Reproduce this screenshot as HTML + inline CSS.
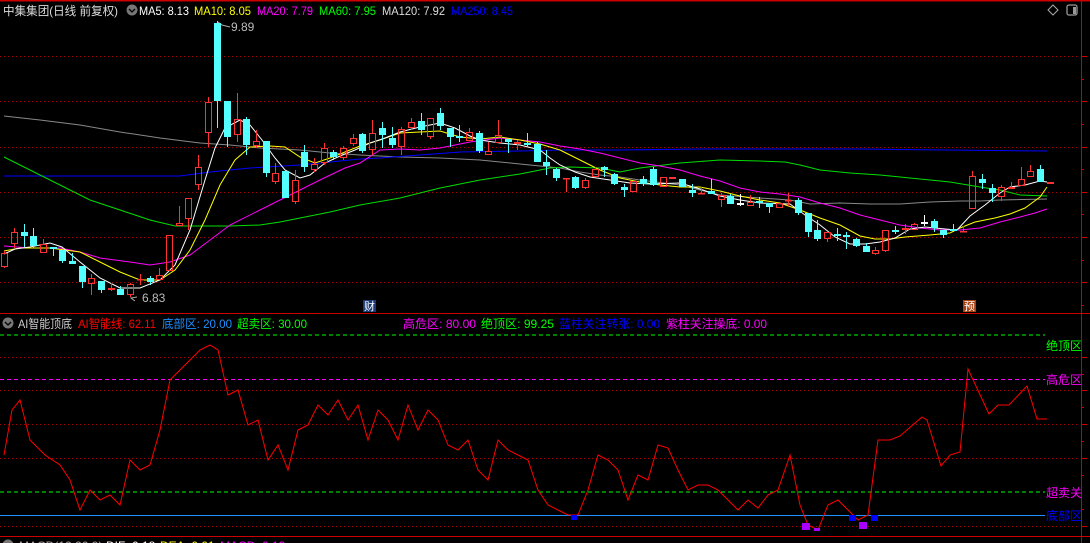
<!DOCTYPE html>
<html><head><meta charset="utf-8">
<style>
html,body{margin:0;padding:0;background:#000;width:1090px;height:543px;overflow:hidden}
svg{display:block}
text{font-family:"Liberation Sans","Noto Sans CJK SC",sans-serif;font-size:12px}
</style></head>
<body>
<svg id="s" width="1090" height="543" viewBox="0 0 1090 543" xmlns="http://www.w3.org/2000/svg">
<rect width="1090" height="543" fill="#000"/>
<line x1="0" y1="0.5" x2="1090" y2="0.5" stroke="#c00" stroke-width="2"/>
<line x1="0" y1="313.5" x2="1090" y2="313.5" stroke="#c00"/>
<line x1="0" y1="536.5" x2="1090" y2="536.5" stroke="#c00"/>
<line x1="1081.5" y1="0" x2="1081.5" y2="543" stroke="#c00"/>
<g id="grid" stroke="#a00" stroke-dasharray="1 3"></g>
<g id="ticks" stroke="#c00"></g>
<!-- header -->
<text x="3" y="15" fill="#ddd" textLength="115" lengthAdjust="spacingAndGlyphs">中集集团(日线 前复权)</text>
<circle cx="132" cy="10" r="5.5" fill="#777"/>
<path d="M129 9 L132 12 L135 9" stroke="#000" stroke-width="1.3" fill="none"/>
<text x="139" y="15" fill="#fff" textLength="50" lengthAdjust="spacingAndGlyphs">MA5: 8.13</text>
<text x="194" y="15" fill="#ff0" textLength="57" lengthAdjust="spacingAndGlyphs">MA10: 8.05</text>
<text x="257" y="15" fill="#f0f" textLength="56" lengthAdjust="spacingAndGlyphs">MA20: 7.79</text>
<text x="319" y="15" fill="#0f0" textLength="57" lengthAdjust="spacingAndGlyphs">MA60: 7.95</text>
<text x="382" y="15" fill="#ddd" textLength="63" lengthAdjust="spacingAndGlyphs">MA120: 7.92</text>
<text x="451" y="15" fill="#00f" textLength="62" lengthAdjust="spacingAndGlyphs">MA250: 8.45</text>
<path d="M1053 5 L1058 10 L1053 15 L1048 10 Z" stroke="#aaa" fill="none"/>
<rect x="1067" y="5" width="10" height="10" rx="2" stroke="#999" fill="none" stroke-width="1.3"/>
<rect x="1073" y="7" width="3" height="7" fill="#999"/>
<!-- price labels -->
<path d="M218 22 L222 25 L230 27" stroke="#aaa" fill="none"/>
<text x="231" y="31" fill="#bbb">9.89</text>
<path d="M137 297 L131 298 L135 301" stroke="#aaa" fill="none"/>
<text x="142" y="302" fill="#bbb">6.83</text>
<g id="mas" fill="none" stroke-width="1"></g>
<g id="candles"></g>
<rect x="363" y="300" width="13" height="12" fill="#1a3a7a"/>
<text x="364" y="310" fill="#fff" style="font-size:11px">财</text>
<rect x="963" y="300" width="13" height="12" fill="#a84010"/>
<text x="964" y="310" fill="#fff" style="font-size:11px">预</text>
<!-- lower header -->
<circle cx="8" cy="323" r="5.5" fill="#777"/>
<path d="M5 322 L8 325 L11 322" stroke="#000" stroke-width="1.3" fill="none"/>
<text x="18" y="328" fill="#ccc" textLength="54" lengthAdjust="spacingAndGlyphs">AI智能顶底</text>
<text x="78" y="328" fill="#f00" textLength="78" lengthAdjust="spacingAndGlyphs">AI智能线: 62.11</text>
<text x="162" y="328" fill="#1e90ff" textLength="70" lengthAdjust="spacingAndGlyphs">底部区: 20.00</text>
<text x="237" y="328" fill="#0f0" textLength="70" lengthAdjust="spacingAndGlyphs">超卖区: 30.00</text>
<text x="403" y="328" fill="#f0f" textLength="73" lengthAdjust="spacingAndGlyphs">高危区: 80.00</text>
<text x="481" y="328" fill="#0f0" textLength="73" lengthAdjust="spacingAndGlyphs">绝顶区: 99.25</text>
<text x="559" y="328" fill="#00f" textLength="101" lengthAdjust="spacingAndGlyphs">蓝柱关注转张: 0.00</text>
<text x="666" y="328" fill="#f0f" textLength="101" lengthAdjust="spacingAndGlyphs">紫柱关注操底: 0.00</text>
<line x1="0" y1="335" x2="1045" y2="335" stroke="#0f0" stroke-dasharray="4 3"/>
<line x1="0" y1="379.5" x2="1045" y2="379.5" stroke="#f0f" stroke-dasharray="4 3"/>
<line x1="0" y1="492" x2="1045" y2="492" stroke="#0f0" stroke-dasharray="4 3"/>
<line x1="0" y1="515.5" x2="1045" y2="515.5" stroke="#1e90ff"/>
<text x="1046" y="350" fill="#0f0">绝顶区</text>
<text x="1046" y="384" fill="#f0f">高危区</text>
<text x="1046" y="497" fill="#f0f">超卖关</text>
<text x="1046" y="520" fill="#00f">底部区</text>
<polyline fill="none" stroke="#f00" points="4,455 12,410 20,400 30,440 45,455 60,465 70,480 80,510 90,490 100,500 110,495 120,505 130,460 140,470 150,465 160,430 170,380 185,365 200,350 210,345 218,350 228,395 238,390 248,425 258,420 268,460 278,445 288,470 298,430 308,425 318,405 328,415 338,400 348,420 358,405 368,440 378,410 388,420 398,440 408,405 418,430 428,410 438,420 448,445 458,450 468,440 478,470 488,480 498,440 508,450 518,455 528,460 538,490 548,505 558,510 568,515 578,515 588,490 598,455 608,460 618,470 628,500 638,475 648,480 658,445 668,448 678,470 688,490 698,485 708,485 718,490 728,500 738,510 748,500 758,508 768,495 778,490 790,455 800,505 808,525 818,530 828,505 838,500 848,510 858,520 868,515 878,440 890,440 900,436 922,417 927,420 941,466 950,455 960,452 968,369 989,414 998,405 1009,405 1027,386 1037,419 1047,419"/>
<rect x="571" y="515" width="6" height="5" fill="#00f"/>
<rect x="802" y="523" width="8" height="7" fill="#a0f"/>
<rect x="814" y="528" width="6" height="3" fill="#a0f"/>
<rect x="849" y="515" width="7" height="6" fill="#00f"/>
<rect x="859" y="522" width="8" height="7" fill="#a0f"/>
<rect x="871" y="515" width="7" height="6" fill="#00f"/>
<!-- MACD header -->
<circle cx="8" cy="545" r="5.5" fill="#777"/>
<text x="19" y="550" fill="#aaa">MACD(12,26,9)</text>
<text x="106" y="550" fill="#fff">DIF: 0.18</text>
<text x="160" y="550" fill="#ff0">DEA: 0.01</text>
<text x="220" y="550" fill="#f0f">MACD: 0.13</text>
</svg>
<script>
var NS="http://www.w3.org/2000/svg";
function el(p,t,a){var e=document.createElementNS(NS,t);for(var k in a)e.setAttribute(k,a[k]);p.appendChild(e);return e;}
var g=document.getElementById("grid"),tk=document.getElementById("ticks");
[56,101,147,192,237,282,357,390,424,458,526].forEach(function(y){el(g,"line",{x1:0,y1:y+.5,x2:1078,y2:y+.5});el(tk,"line",{x1:1081,y1:y+.5,x2:1087,y2:y+.5});});
[79,124,169,214,260,305,374,407,441,475,509].forEach(function(y){el(tk,"line",{x1:1081,y1:y+.5,x2:1084,y2:y+.5});});
var mas=document.getElementById("mas");
var L={
"#888":"4,116 40,120 80,125 120,132 160,138 200,143 230,145 260,148 300,150 330,153 360,155 400,157 440,158 480,160 520,164 560,168 580,172 600,175 620,177 640,180 680,185 700,190 720,195 760,198 790,200 810,204 840,203 870,204 900,204 930,202 960,201 980,201 1000,200 1047,199",
"#00f":"4,176 180,176 210,172 250,168 300,165 360,159 380,158 420,155 460,152 520,151 560,150 620,150 700,149 860,149 946,150 1047,151",
"#0d0":"4,157 30,170 60,185 90,200 120,210 150,220 175,226 200,226 230,226 260,225 280,222 300,218 330,212 360,205 400,198 440,188 480,180 520,174 550,168 570,167 600,168 620,172 640,168 680,163 720,160 760,161 785,162 800,165 820,170 850,173 880,175 910,178 950,182 980,187 1000,190 1020,195 1047,196",
"#f0f":"4,246 30,248 60,248 80,252 100,258 130,262 150,265 170,262 190,255 210,240 230,225 260,210 280,200 300,190 320,180 345,168 360,163 380,150 400,149 420,150 440,148 470,142 500,138 520,140 540,142 560,146 580,149 600,153 620,158 640,163 660,166 680,170 700,176 720,181 740,188 760,192 780,194 800,197 820,203 840,208 860,215 880,220 900,225 920,228 940,230 960,230 980,228 1000,222 1020,217 1035,213 1047,209",
"#ff0":"4,251 20,248 50,248 80,252 100,262 120,272 140,280 160,280 175,270 190,250 205,220 220,185 235,160 250,147 270,146 285,147 300,157 315,163 330,158 345,152 360,146 380,140 400,133 420,132 440,131 460,137 480,139 500,137 520,140 540,144 560,150 580,160 600,170 620,178 640,182 660,185 680,187 700,187 720,191 740,196 760,200 780,203 800,210 820,218 840,225 860,236 875,239 890,239 905,237 930,235 950,233 960,228 975,222 995,218 1010,214 1025,208 1040,197 1047,187",
"#fff":"4,254 15,249 30,247 50,243 62,247 80,262 100,278 120,288 140,288 160,280 175,265 190,230 205,180 215,148 225,128 240,120 250,125 262,140 275,158 285,170 300,178 310,175 325,163 340,156 355,150 370,143 385,138 400,132 420,127 440,123 455,128 470,136 480,140 500,143 520,145 540,150 550,158 560,165 575,172 590,177 610,180 630,183 650,184 680,183 700,189 720,196 740,200 760,203 790,204 805,215 820,225 835,237 850,244 865,244 880,242 895,238 910,229 925,227 945,229 957,230 970,216 985,205 1000,193 1010,187 1025,185 1040,181 1047,182"};
for(var c in L)el(mas,"polyline",{points:L[c],stroke:c});
var D=[[253,267,251,268,"r"],[232,244,228,248,"r"],[232,236,224,247,"c"],[236,246,228,248,"c"],[244,253,239,253,"r"],[247,249,247,256,"c"],[250,261,250,263,"c"],[261,264,253,264,"c"],[266,282,266,288,"c"],[278,284,274,295,"r"],[281,290,281,293,"c"],[288,290,283,291,"r"],[289,295,286,295,"c"],[284,295,283,297,"r"],[279,280,274,285,"r"],[278,282,276,285,"c"],[275,280,268,280,"r"],[235,271,235,271,"r"],[223,226,206,226,"r"],[198,219,198,230,"r"],[167,185,155,190,"r"],[102,133,97,147,"r"],[23,101,21,128,"c"],[101,137,101,147,"c"],[119,135,93,142,"r"],[119,145,117,155,"c"],[141,146,130,148,"r"],[141,173,141,177,"c"],[173,182,163,184,"r"],[171,198,171,198,"c"],[180,202,170,204,"r"],[152,167,145,172,"c"],[164,170,158,172,"r"],[148,163,143,165,"r"],[152,157,150,160,"c"],[148,158,146,160,"r"],[138,144,134,146,"r"],[134,151,133,153,"c"],[133,150,120,155,"r"],[128,135,122,148,"c"],[138,145,127,148,"c"],[129,147,127,155,"r"],[122,128,118,130,"r"],[121,130,113,135,"c"],[118,137,118,139,"r"],[113,126,108,130,"c"],[128,137,128,147,"c"],[136,138,125,142,"c"],[132,141,128,141,"r"],[133,151,131,153,"c"],[151,155,142,155,"r"],[135,143,120,143,"r"],[139,142,139,153,"c"],[142,144,140,150,"r"],[143,145,133,147,"c"],[144,162,142,162,"c"],[162,166,150,175,"c"],[169,178,168,181,"c"],[178,179,178,192,"r"],[177,188,176,189,"c"],[180,188,178,189,"r"],[169,177,167,177,"r"],[167,170,166,177,"c"],[174,184,173,185,"c"],[187,190,184,197,"c"],[181,192,181,192,"r"],[179,184,176,186,"c"],[169,185,167,186,"c"],[177,187,177,187,"r"],[177,179,177,179,"r"],[179,187,179,187,"c"],[190,193,184,197,"c"],[193,194,187,194,"r"],[191,194,179,194,"c"],[195,200,193,207,"r"],[196,204,194,204,"c"],[203,205,194,206,"w"],[202,206,195,206,"r"],[201,203,197,208,"c"],[203,207,203,213,"c"],[203,208,203,208,"r"],[200,201,193,206,"r"],[200,213,198,215,"c"],[213,232,213,237,"c"],[230,239,220,241,"c"],[232,239,232,242,"r"],[234,236,228,241,"c"],[235,237,232,249,"c"],[239,246,238,247,"c"],[246,252,243,252,"c"],[250,254,247,255,"r"],[230,251,230,252,"r"],[230,232,226,234,"c"],[228,230,224,234,"r"],[224,230,223,230,"r"],[222,224,215,226,"w"],[221,228,219,232,"c"],[230,235,230,238,"c"],[229,231,224,232,"c"],[231,232,226,232,"r"],[176,209,171,209,"r"],[179,183,174,189,"c"],[188,193,184,202,"c"],[187,197,185,201,"r"],[187,189,182,189,"r"],[179,186,167,186,"r"],[171,177,165,177,"r"],[169,182,165,182,"c"],[182,184,182,184,"r"]];
var cg=document.getElementById("candles");
D.forEach(function(d,i){
 var x=Math.round(4.3+9.68*i)+.5,t=d[0],b=d[1],h=d[2],l=d[3],k=d[4];
 var col=k=="r"?"#ff3232":(k=="c"?"#54ffff":"#fff");
 if(h<t)el(cg,"line",{x1:x,y1:h,x2:x,y2:t,stroke:col});
 if(l>b)el(cg,"line",{x1:x,y1:b,x2:x,y2:l,stroke:col});
 if(b-t<=2){el(cg,"rect",{x:x-3.5,y:t,width:7,height:Math.max(1.5,b-t),fill:col});}
 else if(k=="r"){el(cg,"rect",{x:x-3,y:t+.5,width:6,height:b-t-1,fill:"none",stroke:col});}
 else el(cg,"rect",{x:x-3.5,y:t,width:7,height:b-t,fill:col});
});
</script>
</body></html>
